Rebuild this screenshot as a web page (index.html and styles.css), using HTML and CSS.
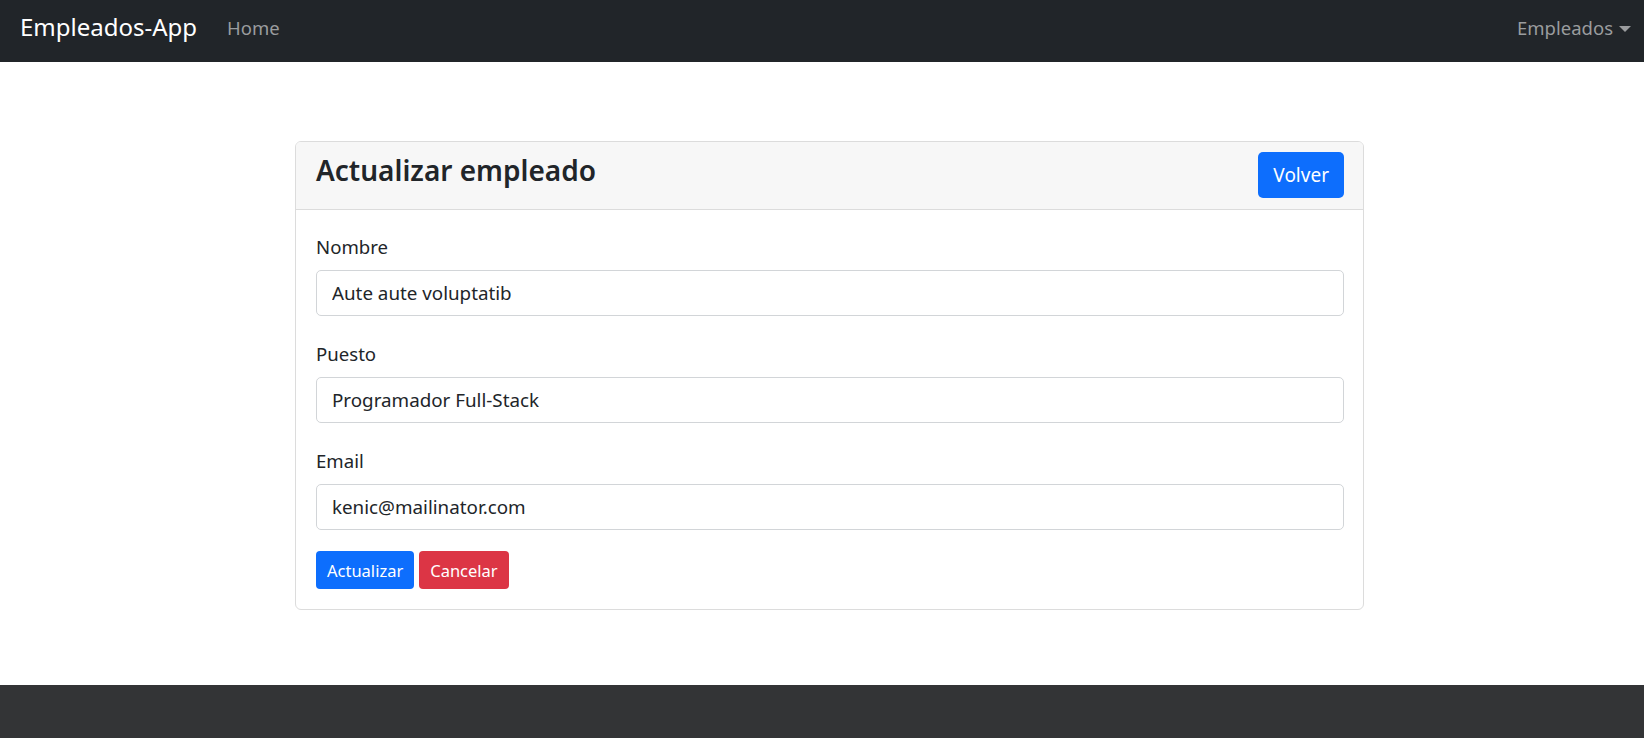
FILE: index.html
```html
<!DOCTYPE html>
<html lang="es">
<head>
<meta charset="utf-8">
<title>Empleados-App</title>
<link rel="stylesheet" href="styles.css">
</head>
<body>
<div class="page">
  <nav class="navbar">
    <div class="nav-left">
      <a class="brand" href="#">Empleados-App</a>
      <a class="nav-link" href="#">Home</a>
    </div>
    <a class="nav-link dropdown" href="#">Empleados<span class="caret"></span></a>
  </nav>
  <main class="main">
    <div class="card">
      <div class="card-header">
        <h3 class="card-title">Actualizar empleado</h3>
        <button class="btn btn-primary btn-lg">Volver</button>
      </div>
      <form class="card-body">
        <div class="field">
          <label class="label">Nombre</label>
          <input class="input" type="text" value="Aute aute voluptatib">
        </div>
        <div class="field">
          <label class="label">Puesto</label>
          <input class="input" type="text" value="Programador Full-Stack">
        </div>
        <div class="field field-last">
          <label class="label">Email</label>
          <input class="input" type="text" value="kenic@mailinator.com">
        </div>
        <div class="actions">
          <button type="button" class="btn btn-primary">Actualizar</button>
          <button type="button" class="btn btn-danger">Cancelar</button>
        </div>
      </form>
    </div>
  </main>
  <footer class="footer"></footer>
</div>
</body>
</html>
```
FILE: styles.css
```css
* { box-sizing: border-box; }
html, body { margin: 0; padding: 0; height: 100%; }
body {
  font-family: "Noto Sans", "Open Sans", sans-serif;
  color: #212529;
  background: #fff;
}
.page {
  min-height: 738px;
  display: flex;
  flex-direction: column;
}
.navbar {
  height: 62px;
  background: #212529;
  display: flex;
  align-items: center;
  justify-content: space-between;
  padding: 0 13px 6px 20px;
}
.nav-left {
  display: flex;
  align-items: center;
  gap: 30px;
}
.brand {
  color: #fff;
  text-decoration: none;
  font-size: 24px;
  line-height: 1;
  padding-bottom: 3px;
}
.nav-link {
  color: #9a9c9e;
  text-decoration: none;
  font-size: 18.5px;
  line-height: 1;
  display: flex;
  align-items: center;
}
.caret {
  display: inline-block;
  width: 0;
  height: 0;
  margin-left: 6px;
  border-left: 6px solid transparent;
  border-right: 6px solid transparent;
  border-top: 6px solid #9a9c9e;
  margin-top: 2px;
}
.main {
  flex: 1;
  padding-top: 79px;
}
.card {
  width: 1069px;
  margin-left: 295px;
  border: 1px solid #dcdcdc;
  border-radius: 6px;
  overflow: hidden;
}
.card-header {
  background: #f7f7f7;
  border-bottom: 1px solid #dcdcdc;
  display: flex;
  align-items: center;
  justify-content: space-between;
  padding: 10px 19px 11px 20px;
}
.card-title {
  margin: 0 0 8px;
  font-size: 28px;
  font-weight: 600;
  color: #212529;
  line-height: 1.2;
}
.card-body {
  padding: 23px 19px 20px 20px;
  margin: 0;
}
.field {
  margin-bottom: 24px;
}
.field-last { margin-bottom: 21px; }
.label {
  display: block;
  font-size: 18.6px;
  line-height: 27px;
  margin-bottom: 10px;
}
.input {
  display: block;
  width: 100%;
  height: 46px;
  border: 1px solid #d2d5d8;
  border-radius: 5px;
  padding: 0 15px;
  font-family: inherit;
  font-size: 18.8px;
  color: #212529;
  background: #fff;
  outline: none;
}
.actions {
  display: flex;
  gap: 5px;
}
.btn {
  border: none;
  border-radius: 4px;
  color: #fff;
  font-family: inherit;
  font-size: 16.5px;
  height: 38px;
  padding: 0 11px;
  cursor: pointer;
}
.btn-lg {
  height: 46px;
  font-size: 19px;
  padding: 0 15px;
  border-radius: 5px;
}
.btn-primary { background: #0d6efd; }
.btn-danger { background: #dc3545; }
.footer {
  height: 53px;
  background: #333436;
}
```
